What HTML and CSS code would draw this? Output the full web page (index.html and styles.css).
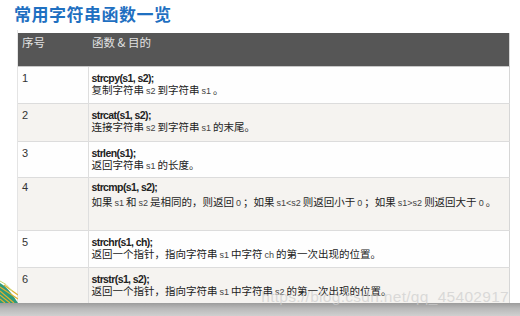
FILE: index.html
```html
<!DOCTYPE html>
<html lang="zh">
<head>
<meta charset="utf-8">
<link rel="stylesheet" href="styles.css">
</head>
<body>
<div class="slide">
  <h1 class="title">常用字符串函数一览</h1>
  <div class="content">
    <div class="gutter">
      <svg class="deco" width="18" height="26" viewBox="0 0 18 26">
        <path d="M0 6 Q8 10 18 26 L0 26 Z" fill="#2f9a7a"/>
        <path d="M0 10 L18 22 M0 14 L14 26 M0 18 L10 26 M0 22 L5 26 M4 8 L18 18" stroke="#e0b030" stroke-width="1.2"/>
        <path d="M0 4 Q6 6 12 14" stroke="#c8d870" stroke-width="1" fill="none"/>
      </svg>
    </div>
    <table class="fn-table">
      <thead>
        <tr class="head"><th class="c-no">序号</th><th class="c-fn">函数 &amp; 目的</th></tr>
      </thead>
      <tbody>
        <tr class="r1"><td class="c-no">1</td><td class="c-fn"><div class="name">strcpy(s1, s2);</div><div class="desc">复制字符串<span class="lat">s2</span>到字符串<span class="lat">s1</span>。</div></td></tr>
        <tr class="r2 alt"><td class="c-no">2</td><td class="c-fn"><div class="name">strcat(s1, s2);</div><div class="desc">连接字符串<span class="lat">s2</span>到字符串<span class="lat">s1</span>的末尾。</div></td></tr>
        <tr class="r3"><td class="c-no">3</td><td class="c-fn"><div class="name">strlen(s1);</div><div class="desc">返回字符串<span class="lat">s1</span>的长度。</div></td></tr>
        <tr class="r4 alt"><td class="c-no">4</td><td class="c-fn"><div class="name">strcmp(s1, s2);</div><div class="desc d4">如果<span class="lat">s1</span>和<span class="lat">s2</span>是相同的，则返回<span class="lat">0</span>；如果<span class="lat">s1&lt;s2</span>则返回小于<span class="lat">0</span>；如果<span class="lat">s1&gt;s2</span>则返回大于<span class="lat">0</span>。</div></td></tr>
        <tr class="r5"><td class="c-no">5</td><td class="c-fn"><div class="name">strchr(s1, ch);</div><div class="desc">返回一个指针，指向字符串<span class="lat">s1</span>中字符<span class="lat">ch</span>的第一次出现的位置。</div></td></tr>
        <tr class="r6 alt"><td class="c-no">6</td><td class="c-fn"><div class="name">strstr(s1, s2);</div><div class="desc">返回一个指针，指向字符串<span class="lat">s1</span>中字符串<span class="lat">s2</span>的第一次出现的位置。</div></td></tr>
      </tbody>
    </table>
  </div>
  <div class="bottom-bar"></div>
  <div class="watermark">https://blog.csdn.net/qq_45402917</div>
</div>
</body>
</html>
```
FILE: styles.css
```css
html, body {
  margin: 0;
  padding: 0;
  background: #ffffff;
}
.slide {
  position: relative;
  width: 520px;
  height: 316px;
  overflow: hidden;
  display: flex;
  flex-direction: column;
  font-family: "Noto Sans CJK SC", sans-serif;
}
.title {
  margin: 0;
  padding: 3px 0 0 14px;
  height: 30px;
  box-sizing: border-box;
  font-size: 17px;
  line-height: 22px;
  font-weight: bold;
  color: #1f70c1;
  letter-spacing: 0.5px;
}
.content {
  display: flex;
  height: 273px;
}
.gutter {
  width: 18px;
  flex: none;
  display: flex;
  flex-direction: column;
  justify-content: flex-end;
  border-right: 1px solid #e4e4e4;
  box-sizing: border-box;
}
.deco {
  display: block;
}
.fn-table {
  width: 492px;
  border-collapse: collapse;
  table-layout: fixed;
  align-self: flex-start;
  margin-top: 3px;
  border-right: 1px solid #d6d6d6;
}
.fn-table th, .fn-table td {
  padding: 0;
  vertical-align: top;
  text-align: left;
}
.head {
  background: #565656;
  height: 33px;
}
.head th {
  font-weight: normal;
  font-size: 11.5px;
  line-height: 14px;
  color: #e2e2e2;
  padding-top: 2px;
  padding-left: 4px;
  border-bottom: 1px solid #c8c8c8;
}
.c-no {
  width: 70px;
  box-sizing: border-box;
}
tbody td.c-no {
  font-family: "Liberation Sans", sans-serif;
  font-size: 11px;
  color: #333;
  padding: 6px 0 0 4px;
  border-right: 1px solid #dedede;
  line-height: 11px;
}
tbody td.c-fn {
  padding: 6px 0 0 3px;
}
tbody tr {
  border-bottom: 1px solid #dcdcdc;
  background: #fefefe;
}
tbody tr.alt {
  background: #f5f3f0;
}
.r1 { height: 37px; }
.r2 { height: 38px; }
.r3 { height: 36px; }
.r4 { height: 53px; }
.r5 { height: 37px; }
.r6 { height: 36px; }
.r4 td.c-fn { padding-top: 4px; }
.r4 td.c-no { padding-top: 4px; }
.name {
  font-family: "Liberation Sans", sans-serif;
  font-weight: bold;
  font-size: 10.5px;
  letter-spacing: -0.6px;
  line-height: 11px;
  color: #222;
}
.desc {
  font-size: 10.5px;
  line-height: 12px;
  color: #222;
  white-space: nowrap;
}
.d4 {
  margin-top: 3px;
}
.lat {
  font-family: "Liberation Sans", sans-serif;
  font-size: 9px;
  color: #444;
  margin: 0 2px;
}
.bottom-bar {
  flex: none;
  height: 13px;
  background: linear-gradient(#9c9c9c, #b8b8b8 40%, #d0d0d0);
}
.watermark {
  position: absolute;
  right: 11px;
  bottom: 13px;
  font-family: "Liberation Sans", sans-serif;
  font-size: 15.5px;
  line-height: 13px;
  color: rgba(205, 205, 205, 0.7);
  letter-spacing: 0.3px;
}
```
